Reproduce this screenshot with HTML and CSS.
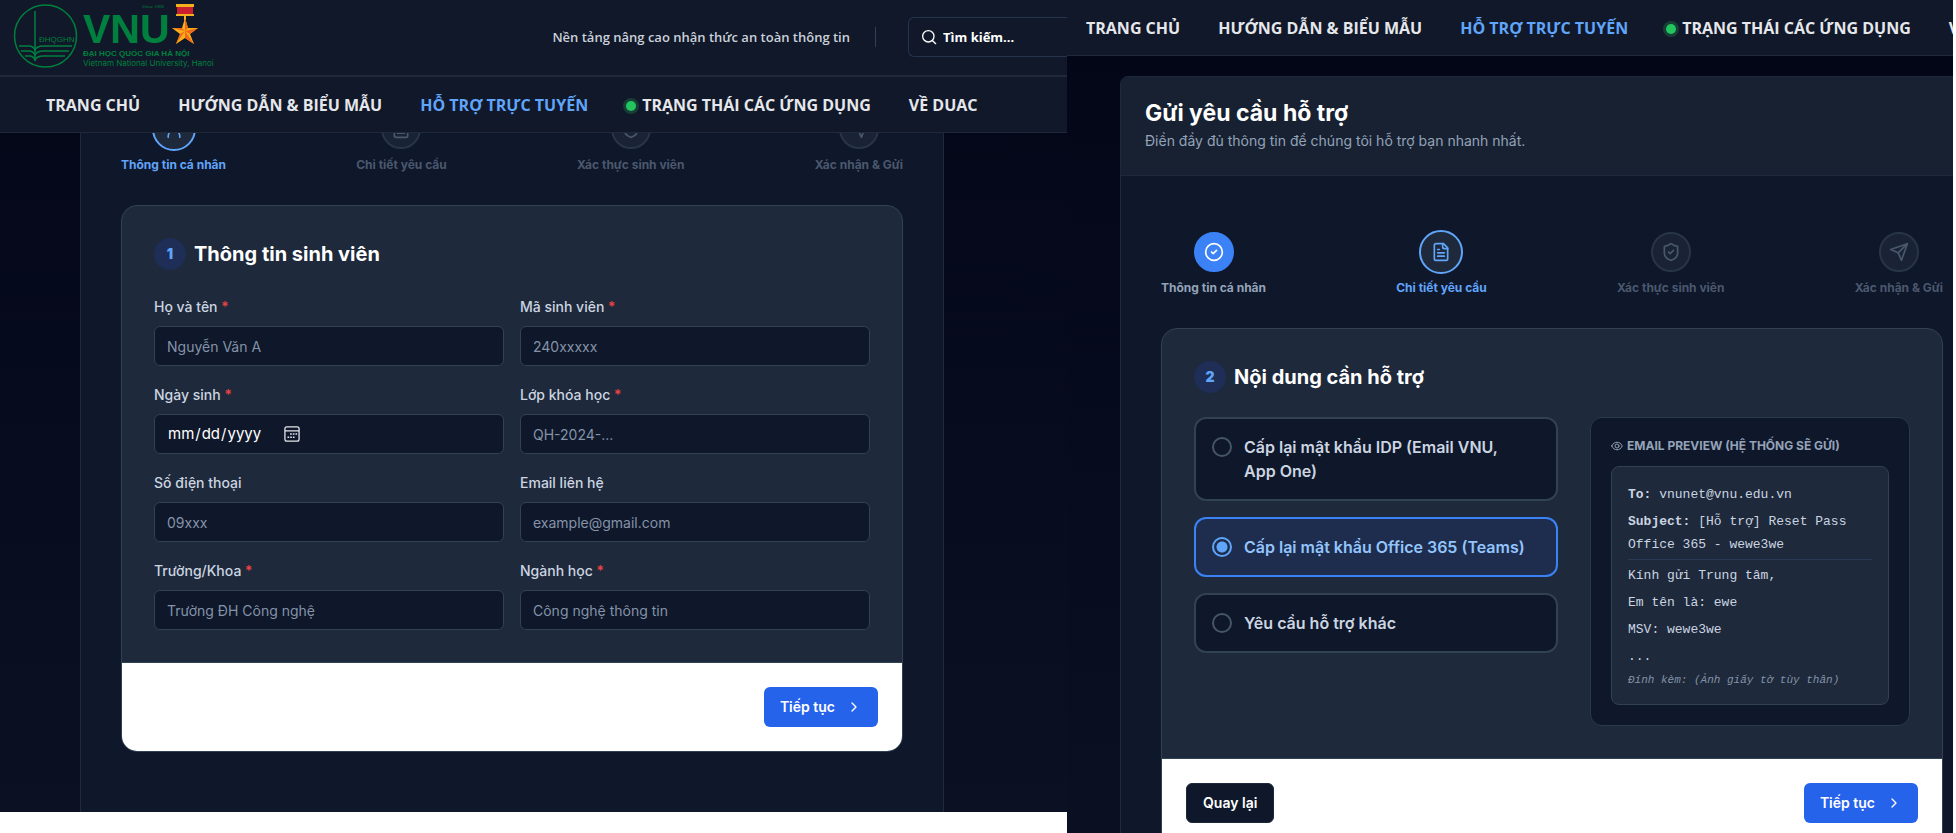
FILE: index.html
```html
<!DOCTYPE html>
<html lang="vi">
	<head>
		<meta charset="UTF-8">
		<title>Hỗ trợ trực tuyến - VNU</title>
		<link rel="stylesheet" href="styles.css">
	</head>
	<body>
		<!-- icon dùng chung -->
		<svg class="sprite" width="0" height="0">
			<symbol id="i-user" viewBox="0 0 24 24"><path d="M5 22v-1c0-4 3-7 7-7s7 3 7 7v1"/><circle cx="12" cy="7" r="4"/></symbol>
			<symbol id="i-check" viewBox="0 0 24 24"><circle cx="12" cy="12" r="10"/><path d="m9 12 2 2 4-4"/></symbol>
			<symbol id="i-file" viewBox="0 0 24 24"><path d="M15 2H6a2 2 0 0 0-2 2v16a2 2 0 0 0 2 2h12a2 2 0 0 0 2-2V7Z"/><path d="M14 2v4a2 2 0 0 0 2 2h4"/><path d="M10 9H8"/><path d="M16 13H8"/><path d="M16 17H8"/></symbol>
			<symbol id="i-shield" viewBox="0 0 24 24"><path d="M20 13c0 5-3.5 7.500-7.660 8.950a1 1 0 0 1-.67-.01C7.500 20.500 4 18 4 13V6a1 1 0 0 1 1-1c2 0 4.500-1.200 6.240-2.720a1.170 1.170 0 0 1 1.520 0C14.510 3.810 17 5 19 5a1 1 0 0 1 1 1z"/><path d="m9 12 2 2 4-4"/></symbol>
			<symbol id="i-send" viewBox="0 0 24 24"><path d="M22 2 15 22l-4-9-9-4Z"/><path d="M22 2 11 13"/></symbol>
			<symbol id="i-search" viewBox="0 0 24 24"><circle cx="11" cy="11" r="8.500"/><path d="m22 22-4.500-4.500"/></symbol>
			<symbol id="i-next" viewBox="0 0 24 24"><path d="m9 18 6-6-6-6"/></symbol>
			<symbol id="i-eye" viewBox="0 0 24 24"><path d="M1.500 12C4 6.500 8 4.500 12 4.500S20 6.500 22.500 12C20 17.500 16 19.500 12 19.500S4 17.500 1.500 12Z"/><circle cx="12" cy="12" r="4"/></symbol>
		</svg>

		<div id="wrap">
			<!-- bước 1 -->
			<section class="screen screen-first">
				<header class="header">
					<div class="topbar">
						<a class="logo" href="#">
							<svg width="200" height="68" viewBox="0 0 200 68">
								<g fill="none" stroke="#00803e" stroke-width="1.500">
									<circle cx="31.500" cy="33" r="31"/>
									<path d="M21 8v50"/>
									<path d="M5 43h10q4 0 6 4q2-4 8-4h29M7 48h8q4 0 6 4q2-4 8-4h26M11 53h5q3 0 5 4q2-4 8-4h22"/>
								</g>
								<g fill="#00803e">
									<text class="logo-small" x="25" y="39">ĐHQGHN</text>
									<text class="logo-name" x="69" y="40">VNU</text>
									<text class="logo-vi" x="69" y="53">ĐẠI HỌC QUỐC GIA HÀ NỘI</text>
									<text class="logo-en" x="69" y="63">Vietnam National University, Hanoi</text>
									<text class="logo-since" x="128" y="5">Since 1906</text>
								</g>
								<path fill="#f2b01e" d="M162 1h18v3h-18zM162 11h18v2h-18zM170 13h2v4h-2z"/>
								<path fill="#c8202f" d="M163 4h16v7h-16z"/>
								<path fill="#fbb116" d="M171 15l3 10h10l-8 6 4 10-9-6-9 6 4-10-8-6h10z"/>
								<path fill="#f0681c" d="M171 15v13l3-3zM184 25l-13 3 5 3zM180 41l-9-13v7zM162 41l9-13-5 3zM158 25l13 3-3-3z"/>
							</svg>
						</a>
						<p class="slogan">Nền tảng nâng cao nhận thức an toàn thông tin</p>
						<label class="search">
							<svg class="icon" width="16" height="16"><use href="#i-search"/></svg>
							<input type="text" placeholder="Tìm kiếm..." aria-label="Tìm kiếm">
						</label>
					</div>
					<nav class="nav">
						<a href="#">TRANG CHỦ</a>
						<a href="#">HƯỚNG DẪN &amp; BIỂU MẪU</a>
						<a href="#" class="active">HỖ TRỢ TRỰC TUYẾN</a>
						<a href="#"><i class="dot"></i>TRẠNG THÁI CÁC ỨNG DỤNG</a>
						<a href="#">VỀ DUAC</a>
					</nav>
				</header>
				<div class="wizard">
					<ol class="steps">
						<li class="current"><span><svg class="icon" width="20" height="20"><use href="#i-user"/></svg></span>Thông tin cá nhân</li>
						<li><span><svg class="icon" width="20" height="20"><use href="#i-file"/></svg></span>Chi tiết yêu cầu</li>
						<li><span><svg class="icon" width="20" height="20"><use href="#i-shield"/></svg></span>Xác thực sinh viên</li>
						<li><span><svg class="icon" width="20" height="20"><use href="#i-send"/></svg></span>Xác nhận &amp; Gửi</li>
					</ol>
					<form class="card">
						<div class="card-body">
							<h2><b>1</b>Thông tin sinh viên</h2>
							<div class="fields">
								<div>
									<label for="name">Họ và tên <em>*</em></label>
									<input id="name" type="text" placeholder="Nguyễn Văn A">
								</div>
								<div>
									<label for="code">Mã sinh viên <em>*</em></label>
									<input id="code" type="text" placeholder="240xxxxx">
								</div>
								<div>
									<label for="birth">Ngày sinh <em>*</em></label>
									<input id="birth" type="date">
								</div>
								<div>
									<label for="class">Lớp khóa học <em>*</em></label>
									<input id="class" type="text" placeholder="QH-2024-...">
								</div>
								<div>
									<label for="phone">Số điện thoại</label>
									<input id="phone" type="text" placeholder="09xxx">
								</div>
								<div>
									<label for="email">Email liên hệ</label>
									<input id="email" type="text" placeholder="example@gmail.com">
								</div>
								<div>
									<label for="school">Trường/Khoa <em>*</em></label>
									<input id="school" type="text" placeholder="Trường ĐH Công nghệ">
								</div>
								<div>
									<label for="major">Ngành học <em>*</em></label>
									<input id="major" type="text" placeholder="Công nghệ thông tin">
								</div>
							</div>
						</div>
						<div class="card-foot">
							<button type="button" class="btn btn-next">Tiếp tục<svg class="icon" width="16" height="16"><use href="#i-next"/></svg></button>
						</div>
					</form>
				</div>
			</section>

			<!-- bước 2 -->
			<section class="screen screen-second">
				<header class="header">
					<nav class="nav">
						<a href="#">TRANG CHỦ</a>
						<a href="#">HƯỚNG DẪN &amp; BIỂU MẪU</a>
						<a href="#" class="active">HỖ TRỢ TRỰC TUYẾN</a>
						<a href="#"><i class="dot"></i>TRẠNG THÁI CÁC ỨNG DỤNG</a>
						<a href="#">VỀ DUAC</a>
					</nav>
				</header>
				<div class="wizard">
					<div class="wizard-head">
						<h1>Gửi yêu cầu hỗ trợ</h1>
						<p>Điền đầy đủ thông tin để chúng tôi hỗ trợ bạn nhanh nhất.</p>
					</div>
					<ol class="steps">
						<li class="done"><span><svg class="icon" width="20" height="20"><use href="#i-check"/></svg></span>Thông tin cá nhân</li>
						<li class="current"><span><svg class="icon" width="20" height="20"><use href="#i-file"/></svg></span>Chi tiết yêu cầu</li>
						<li><span><svg class="icon" width="20" height="20"><use href="#i-shield"/></svg></span>Xác thực sinh viên</li>
						<li><span><svg class="icon" width="20" height="20"><use href="#i-send"/></svg></span>Xác nhận &amp; Gửi</li>
					</ol>
					<form class="card">
						<div class="card-body">
							<h2><b>2</b>Nội dung cần hỗ trợ</h2>
							<div class="request">
								<div class="options">
									<label><input type="radio" name="type"><span>Cấp lại mật khẩu IDP (Email VNU,<br>App One)</span></label>
									<label><input type="radio" name="type" checked><span>Cấp lại mật khẩu Office 365 (Teams)</span></label>
									<label><input type="radio" name="type"><span>Yêu cầu hỗ trợ khác</span></label>
								</div>
								<div class="preview">
									<h3><svg class="icon" width="12" height="12"><use href="#i-eye"/></svg>EMAIL PREVIEW (HỆ THỐNG SẼ GỬI)</h3>
									<div class="mail">
										<p><strong>To:</strong> vnunet@vnu.edu.vn</p>
										<p class="subject"><strong>Subject:</strong> [Hỗ trợ] Reset Pass Office 365 - wewe3we</p>
										<p>Kính gửi Trung tâm,</p>
										<p>Em tên là: ewe</p>
										<p>MSV: wewe3we</p>
										<p>...</p>
										<p class="attach">Đính kèm: (Ảnh giấy tờ tùy thân)</p>
									</div>
								</div>
							</div>
						</div>
						<div class="card-foot">
							<button type="button" class="btn btn-back">Quay lại</button>
							<button type="button" class="btn btn-next">Tiếp tục<svg class="icon" width="16" height="16"><use href="#i-next"/></svg></button>
						</div>
					</form>
				</div>
			</section>
		</div>
	</body>
</html>
```
FILE: styles.css
```css
*{
	margin: 0;
	padding: 0;
	box-sizing: border-box;
}
body{
	background: #fff;
	color: #fff;
	font: 14px/20px Inter, "Open Sans", sans-serif;
}
input, button{
	font: inherit;
}
a{
	color: inherit;
	text-decoration: none;
}
.sprite{
	position: absolute;
}
.icon{
	flex: none;
	fill: none;
	stroke: currentColor;
	stroke-width: 2;
	stroke-linecap: round;
	stroke-linejoin: round;
}
#wrap{
	display: flex;
	align-items: flex-start;
	height: 100vh;
	padding-right: 3px;
	overflow: hidden;
}
.screen{
	min-width: 0;
	overflow: hidden;
	background: linear-gradient(#020617, #0b1023);
}
.screen-first{
	flex: 1067 1 0;
}
.screen-second{
	flex: 886 1 0;
}

/* header */
.header{
	position: relative;
	z-index: 1;
	background: #101829;
	border-bottom: 1px solid #1f2937;
	font-family: "Open Sans", sans-serif;
}
.topbar{
	display: flex;
	align-items: center;
	height: 77px;
	padding: 0 0 2px 14px;
	border-bottom: 2px solid #1f2937;
}
.logo{
	margin-right: auto;
	line-height: 0;
}
.logo svg{
	overflow: visible;
}
.logo text{
	font-family: "Liberation Sans", sans-serif;
}
.logo .logo-small{
	font-size: 8px;
}
.logo .logo-name{
	font-size: 41px;
	font-weight: bold;
}
.logo .logo-vi{
	font-size: 8px;
	font-weight: bold;
}
.logo .logo-en{
	font-family: Inter, sans-serif;
	font-size: 8px;
}
.logo .logo-since{
	font: italic 5px "Liberation Serif", serif;
}
.slogan{
	padding-right: 25px;
	margin-right: 32px;
	border-right: 1px solid #334155;
	color: #cbd0d9;
	font-size: 13px;
	font-weight: 600;
	white-space: nowrap;
}
.search{
	display: flex;
	align-items: center;
	gap: 6px;
	width: 159px;
	height: 40px;
	padding-left: 12px;
	border: 1px solid #24344d;
	border-right: 0;
	border-radius: 6px 0 0 6px;
}
.search input{
	width: 100px;
	border: 0;
	outline: 0;
	background: none;
	color: #fff;
	font-size: 13px;
	font-weight: bold;
}
.search input::placeholder{
	color: #fff;
}
.nav{
	display: flex;
	align-items: center;
	gap: 38px;
	height: 55px;
	padding-left: 46px;
	color: #e5e7eb;
	font-size: 16px;
	font-weight: bold;
	white-space: nowrap;
}
.screen-second .nav{
	padding-left: 19px;
}
.nav .active{
	color: #60a5fa;
}
.dot{
	display: inline-block;
	width: 10px;
	height: 10px;
	margin-right: 6px;
	border-radius: 50%;
	background: #22c55e;
	box-shadow: 0 0 0 3px #173f36;
}

/* wizard */
.wizard{
	width: 864px;
	padding-bottom: 60px;
	background: #0f172a;
	border: 1px solid #1e293b;
}
.screen-first .wizard{
	margin: -81px 0 0 80px;
	border-bottom: 0;
}
.screen-second .wizard{
	margin: 20px 0 0 53px;
	border-radius: 8px 8px 0 0;
}
.wizard-head{
	padding: 24px;
	background: #172132;
	border-bottom: 1px solid #1e293b;
	border-radius: 7px 7px 0 0;
}
.wizard-head h1{
	margin-bottom: 6px;
	font-size: 23px;
	line-height: 24px;
}
.wizard-head p{
	color: #94a3b8;
}
.steps{
	display: flex;
	justify-content: space-between;
	padding: 56px 40px 32px;
	list-style: none;
}
.steps li{
	display: flex;
	flex-direction: column;
	align-items: center;
	gap: 8px;
	color: #64748b;
	font-size: 12px;
	font-weight: bold;
	line-height: 16px;
	opacity: 0.7;
}
.steps span{
	display: flex;
	align-items: center;
	justify-content: center;
	width: 40px;
	height: 40px;
	background: #1e293b;
	border: 2px solid #334155;
	border-radius: 50%;
}
.steps .done{
	color: #94a3b8;
	opacity: 1;
}
.steps .done span{
	color: #fff;
	background: #3b82f6;
	border-color: #3b82f6;
}
.steps .current{
	color: #60a5fa;
	opacity: 1;
}
.steps .current span{
	width: 44px;
	height: 44px;
	margin: -2px 0;
	border-color: #60a5fa;
}

/* card */
.card{
	margin: 0 40px;
	overflow: hidden;
	background: #1e293b;
	border: 1px solid #334155;
	border-radius: 16px;
}
.card-body{
	padding: 32px;
}
.card h2{
	display: flex;
	align-items: center;
	gap: 8px;
	margin-bottom: 24px;
	font-size: 20px;
	line-height: 32px;
}
.card h2 b{
	width: 32px;
	border-radius: 50%;
	background: #1e2e56;
	color: #60a5fa;
	font-size: 14px;
	text-align: center;
}
.fields{
	display: grid;
	grid-template-columns: 1fr 1fr;
	gap: 16px;
}
.fields label{
	display: block;
	margin-bottom: 6px;
	color: #cbd5e1;
	font-weight: 500;
	line-height: 26px;
}
.fields em{
	color: #ef4444;
	font-style: normal;
}
.fields input{
	display: block;
	width: 100%;
	height: 40px;
	padding: 0 12px;
	background: #0f172a;
	border: 1px solid #334155;
	border-radius: 6px;
	outline: 0;
	color: #fff;
	color-scheme: dark;
}
.fields input::placeholder{
	color: #8493a8;
}
.fields input[type="date"]{
	display: flex;
	font-size: 15px;
}
.fields input::-webkit-datetime-edit{
	flex: none;
}
.fields input::-webkit-calendar-picker-indicator{
	width: 14px;
	height: 14px;
	margin-left: 0;
	background: url("data:image/svg+xml,%3Csvg xmlns='http://www.w3.org/2000/svg' viewBox='0 0 14 14' fill='none' stroke='%23e5e7eb'%3E%3Crect x='1.500' y='1.500' width='11' height='11' rx='1.500'/%3E%3Cpath d='M1.500 4.500h11'/%3E%3Cpath d='M5.500 7h5.500M3.500 9.500h5.500' stroke-width='1.300' stroke-dasharray='1.300 .8'/%3E%3C/svg%3E") center no-repeat;
}
.card-foot{
	display: flex;
	padding: 24px;
	background: #fff;
	border-top: 1px solid #334155;
}
.btn{
	display: flex;
	align-items: center;
	height: 40px;
	padding: 0 16px;
	border: 0;
	border-radius: 6px;
	color: #fff;
	font-weight: 600;
	cursor: pointer;
}
.btn-next{
	gap: 11px;
	margin-left: auto;
	background: #2563eb;
}
.btn-back{
	background: #0f172a;
	border: 1px solid #1e293b;
}

/* request */
.request{
	display: grid;
	grid-template-columns: 1fr 320px;
	gap: 32px;
}
.options{
	display: flex;
	flex-direction: column;
	align-items: stretch;
	gap: 16px;
}
.options label{
	display: flex;
	gap: 12px;
	padding: 16px;
	background: #0f172a;
	border: 2px solid #334155;
	border-radius: 12px;
	color: #cbd5e1;
	font-size: 16px;
	font-weight: 600;
	line-height: 24px;
}
.options label:has(input:checked){
	background: #1e2d4d;
	border-color: #3b82f6;
	color: #93c5fd;
}
.options input{
	flex: none;
	appearance: none;
	width: 20px;
	height: 20px;
	margin-top: 2px;
	border: 2px solid #475569;
	border-radius: 50%;
}
.options input:checked{
	border-color: #60a5fa;
	background: radial-gradient(circle, #60a5fa 5px, transparent 6px);
}
.preview{
	padding: 20px;
	background: #0f172a;
	border: 1px solid #2b394d;
	border-radius: 12px;
}
.preview h3{
	display: flex;
	align-items: center;
	gap: 4px;
	margin-bottom: 12px;
	color: #94a3b8;
	font-size: 12px;
	line-height: 16px;
	white-space: nowrap;
}
.mail{
	padding: 16px;
	background: #1e293b;
	border: 1px solid #334155;
	border-radius: 8px;
	color: #cbd5e1;
	font: 13px/23px "Liberation Mono", "DejaVu Sans Mono", monospace;
}
.mail p{
	margin-bottom: 4px;
}
.mail .subject{
	padding-bottom: 3px;
	border-bottom: 1px solid #2b3a55;
}
.mail .attach{
	margin-bottom: 0;
	color: #8493a8;
	font-size: 11px;
	font-style: italic;
	line-height: 16px;
}
```
